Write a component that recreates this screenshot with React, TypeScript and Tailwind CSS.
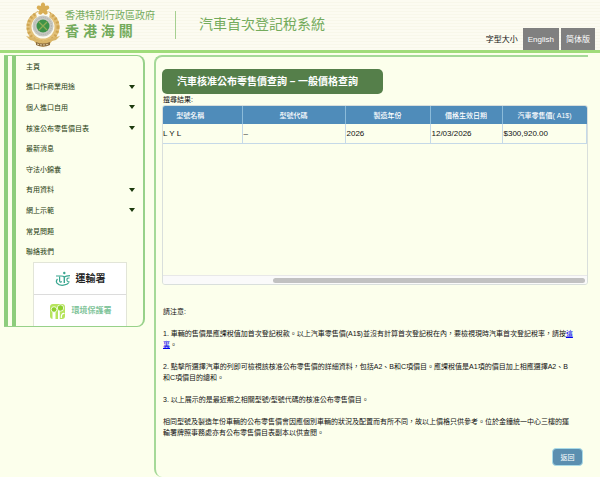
import type { ReactNode } from 'react';

const menuItems = [
  { label: '主頁', hasSub: false },
  { label: '進口作商業用途', hasSub: true },
  { label: '個人進口自用', hasSub: true },
  { label: '核准公布零售價目表', hasSub: true },
  { label: '最新消息', hasSub: false },
  { label: '守法小錦囊', hasSub: false },
  { label: '有用資料', hasSub: true },
  { label: '網上示範', hasSub: true },
  { label: '常見問題', hasSub: false },
  { label: '聯絡我們', hasSub: false },
];

export default function App() {
  return (
    <div className="flex min-h-screen flex-col bg-[#fcffec] font-['Liberation_Sans','Noto_Sans_CJK_TC',sans-serif] text-[7px] leading-[11px] text-[#111]">
      <Header />
      <div className="flex flex-1 items-start gap-[9px] pt-[2px] pr-3 pl-1">
        <Sidebar />
        <main className="min-w-0 flex-1 self-stretch rounded-l-lg border-t-2 border-l-2 border-[#a5d998] pt-3 pl-[6px]">
          <h1 className="w-[221px] max-w-full rounded-[5px] bg-[#557f4a] px-[15px] py-[5px] text-[10px] leading-[15px] font-bold text-white">
            汽車核准公布零售價查詢 – 一般價格查詢
          </h1>
          <p className="pl-px">搜尋結果:</p>
          <Results />
          <Notes />
          <div className="mt-[10px] flex justify-end pr-[5px]">
            <button
              type="button"
              className="h-[18px] w-[31px] cursor-pointer rounded-[4px] border border-[#a9dbe8] bg-[#5b8fb0] text-white"
            >
              返回
            </button>
          </div>
        </main>
      </div>
    </div>
  );
}

function Header() {
  return (
    <header className="flex h-[53px] justify-between border-b-[3px] border-[#a0dc7a] bg-[repeating-linear-gradient(to_bottom,#fcfbf1_0px,#fcfbf1_2px,#f8f7ea_2px,#f8f7ea_3px)]">
      <div className="flex items-center pl-[25px] text-[#74ab5c]">
        <Emblem />
        <div className="ml-[4px] pb-[2px]">
          <p className="text-[10px] leading-[14px]">香港特別行政區政府</p>
          <p className="text-[14px] leading-[16px] font-bold">香 港 海 關</p>
        </div>
        <div className="ml-[20px] h-7 w-px bg-[#a5cf90]" />
        <p className="ml-[23px] pb-[2px] text-[14px] leading-[18px]">汽車首次登記稅系統</p>
      </div>
      <div className="flex items-end gap-[2px] pr-[5px] text-[8px]">
        <button type="button" className="mr-[3px] h-[22px] cursor-pointer">
          字型大小
        </button>
        <LangLink label="English" />
        <LangLink label="简体版" />
      </div>
    </header>
  );
}

function LangLink({ label }: { label: string }) {
  return (
    <a
      href="#"
      className="flex h-[22px] items-center bg-[#808080] px-[5px] font-['Liberation_Sans','Noto_Sans_CJK_SC',sans-serif] text-white"
    >
      {label}
    </a>
  );
}

function Sidebar() {
  return (
    <aside className="flex w-[141px] shrink-0 overflow-hidden rounded-r-lg border-y border-r-2 border-[#97d189]">
      <div className="flex gap-1">
        <div className="w-1 bg-[#8dcd7c]" />
        <div className="w-1 bg-[#8dcd7c]" />
      </div>
      <div className="min-w-0 flex-1">
        <ul className="grid h-[206px] grid-rows-10 pr-[8px] pl-[10px] text-[#1c3a0e]">
          {menuItems.map((item) => (
            <li key={item.label} className="flex items-center">
              <a href="#" className="flex flex-1 items-center justify-between">
                {item.label}
                {item.hasSub && (
                  <svg width="6" height="4" viewBox="0 0 6 4" aria-hidden="true">
                    <path d="M0 0h6L3 4z" fill="#1c3a0e" />
                  </svg>
                )}
              </a>
            </li>
          ))}
        </ul>
        <div className="mr-4 ml-[17px] border-x border-t border-[#e2e5d8] bg-white">
          <DeptLink>
            <TransportLogo />
            <span className="text-[10px] font-bold text-[#222]">運輸署</span>
          </DeptLink>
          <div className="h-px bg-[#dcdcdc]" />
          <DeptLink>
            <EpdLogo />
            <span className="text-[8px] font-bold text-[#7fc49a]">環境保護署</span>
          </DeptLink>
        </div>
      </div>
    </aside>
  );
}

function DeptLink({ children }: { children: ReactNode }) {
  return (
    <a href="#" className="flex h-[31px] items-center justify-center gap-[5px]">
      {children}
    </a>
  );
}

function Results() {
  return (
    <div className="flex h-[180px] flex-col overflow-hidden rounded-[3px] border border-[#d9dfdc]">
      <div className="flex-1">
        <table className="w-full table-fixed border-collapse">
          <colgroup>
            <col className="w-[79px]" />
            <col className="w-[103px]" />
            <col className="w-[85px]" />
            <col className="w-[72px]" />
            <col />
          </colgroup>
          <thead>
            <tr className="h-[18px] bg-[#4f8cba] text-white">
              <th className="border-r border-[#8bbbd9] pr-6 font-medium">型號名稱</th>
              <th className="border-r border-[#8bbbd9] font-medium">型號代碼</th>
              <th className="border-r border-[#8bbbd9] font-medium">製造年份</th>
              <th className="border-r border-[#8bbbd9] font-medium">價格生效日期</th>
              <th className="font-medium">汽車零售價( A1$)</th>
            </tr>
          </thead>
          <tbody>
            <tr className="h-[19px] border-b border-[#c5d9e8] text-[8px]">
              <td className="border-r border-[#c5d9e8]">L Y L</td>
              <td className="border-r border-[#c5d9e8] pl-px">–</td>
              <td className="border-r border-[#c5d9e8] pl-px">2026</td>
              <td className="border-r border-[#c5d9e8] pl-px">12/03/2026</td>
              <td className="border-r border-[#c5d9e8] pl-px">$300,920.00</td>
            </tr>
          </tbody>
        </table>
      </div>
      {/* horizontal scroll track */}
      <div className="flex h-[9px] items-center justify-end border-t border-[#e8e8e8] bg-[#fafafa] pr-[2px]">
        <div className="h-[5px] w-[74%] rounded-full bg-[#c1c1c1]" />
      </div>
    </div>
  );
}

function Notes() {
  return (
    <section className="mt-[21px] flex flex-col gap-[11px] pr-[14px] pl-px">
      <p>請注意:</p>
      <p>
        1. 車輛的售價是應課稅值加首次登記稅款。以上汽車零售價(A1$)並沒有計算首次登記稅在內，要檢視現時汽車首次登記稅率，請按
        <a href="#" className="text-[#0000ee] underline">
          這裏
        </a>
        。
      </p>
      <p>
        2. 點擊所選擇汽車的列即可檢視該核准公布零售價的詳細資料，包括A2、B和C項價目。應課稅值是A1項的價目加上相應選擇A2、B和C項價目的總和。
      </p>
      <p>3. 以上展示的是最近期之相關型號/型號代碼的核准公布零售價目。</p>
      <p>
        相同型號及製造年份車輛的公布零售價會因應個別車輛的狀況及配置而有所不同，故以上價格只供參考。位於金鐘統一中心三樓的運輸署牌照事務處亦有公布零售價目表副本以供查閱。
      </p>
    </section>
  );
}

function Emblem() {
  return (
    <svg width="36" height="46" viewBox="0 0 36 46" aria-hidden="true">
      {/* wreath */}
      <circle cx="18" cy="25" r="14" fill="none" stroke="#e2c078" strokeWidth="5" />
      <circle cx="18" cy="25" r="15" fill="none" stroke="#cfa552" strokeWidth="3" strokeDasharray="2 2" />
      <path d="M1 34l8 2 9 3 9-3 8-2-4 4-4 1-3 4-6 2-6-2-3-4-4-1z" fill="#d9b568" />
      <path d="M11 40q7 3 14 0v3q-7 3-14 0z" fill="#8a6a3c" />
      <path d="M12 42q6 2 12 0" fill="none" stroke="#e9d9b0" strokeDasharray="2 1" />
      <path d="M11 11l7-4 7 4-1 5H12z" fill="#fcfbf1" />
      {/* flower */}
      <g fill="#d9ae55">
        <ellipse cx="18" cy="4" rx="2.2" ry="3.5" />
        <ellipse cx="18" cy="4" rx="2.2" ry="3.5" transform="rotate(72 18 7)" />
        <ellipse cx="18" cy="4" rx="2.2" ry="3.5" transform="rotate(144 18 7)" />
        <ellipse cx="18" cy="4" rx="2.2" ry="3.5" transform="rotate(216 18 7)" />
        <ellipse cx="18" cy="4" rx="2.2" ry="3.5" transform="rotate(288 18 7)" />
      </g>
      {/* badge */}
      <circle cx="18" cy="24" r="10.5" fill="#c6c8c2" />
      <circle cx="18" cy="24" r="8.5" fill="none" stroke="#adb0aa" strokeDasharray="1 1" />
      <circle cx="18" cy="24" r="6.5" fill="#3d9349" />
      <path d="M14 20l8 8M22 20l-8 8" stroke="#8fae55" strokeWidth="1.2" />
    </svg>
  );
}

function TransportLogo() {
  return (
    <svg width="16" height="16" viewBox="0 0 16 16" fill="none" stroke="#3aa690" aria-hidden="true">
      <circle cx="9.3" cy="2" r="1.2" fill="#3aa690" stroke="none" />
      <path d="M1 5h5q2.500 0 3.300 1Q10.500 5 15 4.600" strokeWidth="1.2" />
      <path d="M4.600 5.500v4.500q.5 1.800 2.200.6" strokeWidth="1.200" />
      <path d="M9.300 5.500v6.500" strokeWidth="1.400" />
      <path d="M14.500 7q-2.600-.4-2.600 1.800t2.600 1.900" strokeWidth="1.100" />
      <path d="M2.500 8Q.6 10 2 12.200q2 2.500 6.500 2 4-.5 5.500-2.700" strokeWidth="1.300" />
    </svg>
  );
}

function EpdLogo() {
  return (
    <svg width="18" height="16" viewBox="0 0 18 16" aria-hidden="true">
      <rect x="1" y="1" width="15" height="15" rx="3" fill="#b6e45c" />
      <path d="M3.500 16V8.500h3V16z" fill="#fff" />
      <path d="M9 16V6.500h1.800V16z" fill="#fff" />
      <circle cx="5" cy="6.500" r="2.800" fill="#8ed02e" stroke="#fff" strokeWidth=".8" />
      <circle cx="11.500" cy="5" r="3.200" fill="#8ed02e" stroke="#fff" strokeWidth=".8" />
      <path d="M15.500 10.500q-3.500-.5-3.200 4.500" stroke="#fff" strokeWidth="1.200" fill="none" />
    </svg>
  );
}
